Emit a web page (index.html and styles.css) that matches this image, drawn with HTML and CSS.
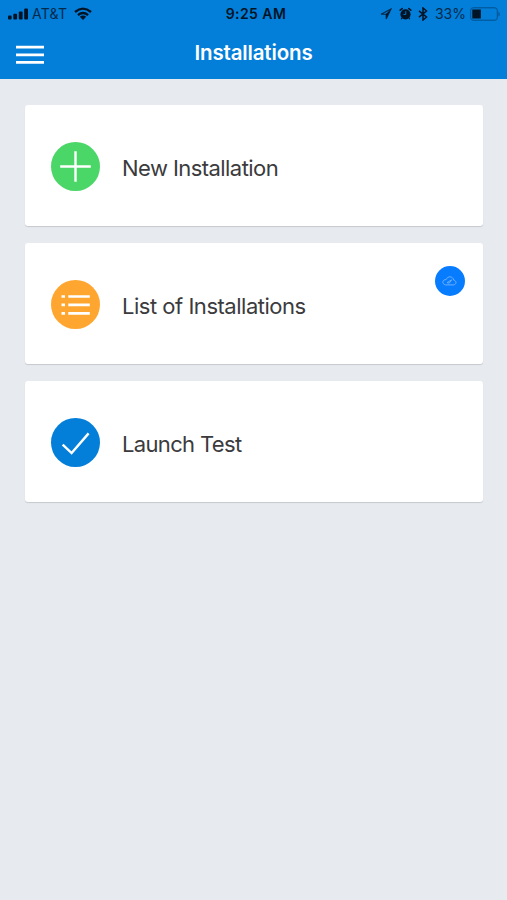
FILE: index.html
```html
<!DOCTYPE html>
<html lang="en">
<head>
<meta charset="utf-8">
<title>Installations</title>
<link rel="stylesheet" href="styles.css">
</head>
<body>
<header class="header">
  <div class="status">
    <div class="status-left">
      <svg class="signal" width="21" height="12" viewBox="0 0 21 12"><rect x="0" y="7.6" width="3.6" height="4" rx="1"/><rect x="5.3" y="5.8" width="3.8" height="5.8" rx="1"/><rect x="10.8" y="3.4" width="3.8" height="8.2" rx="1"/><rect x="16.2" y="0.4" width="3.8" height="11.2" rx="1"/></svg>
      <span class="carrier">AT&amp;T</span>
      <svg class="wifi" width="18" height="13" viewBox="0 0 18 13"><g fill="none" stroke="#001425" stroke-width="2.3"><path d="M1 5Q9-1.8 17 5"/><path d="M3.9 8.1Q9 3.8 14.1 8.1"/></g><path d="M5.8 9.7Q9 7.2 12.2 9.7L9 13Z"/></svg>
    </div>
    <span class="time">9:25 AM</span>
    <div class="status-right">
      <svg width="12" height="12" viewBox="0 0 12 12"><path d="M1 6.2L11 1L6.2 11V6.2Z" fill="none" stroke="#022a4a" stroke-width="1.1"/><path d="M6 6L11 1L6.5 10Z"/></svg>
      <svg class="alarm" width="13" height="14" viewBox="0 0 13 14"><circle cx="6.5" cy="7.3" r="5.1"/><path d="M1.2 3.2L3.2 1.6M9.8 1.6L11.8 3.2" stroke="#001425" stroke-width="1.6" stroke-linecap="round"/><path d="M3 11L2.2 12.3M10 11L10.8 12.3" stroke="#001425" stroke-width="1.2"/><path d="M6.8 4.2V7.5H4.4" fill="none" stroke="#0072c6" stroke-width="1"/></svg>
      <svg class="bluetooth" width="10" height="14" viewBox="0 0 10 14"><path d="M1 3.9L8.5 10L5 13V1L8.5 4L1 10.1" fill="none" stroke="#001425" stroke-width="1.5"/></svg>
      <span class="percent">33%</span>
      <svg class="battery" width="31" height="14" viewBox="0 0 31 14"><rect x=".7" y=".8" width="26.6" height="12.4" rx="2.5" fill="none" stroke="#034f8b" stroke-width="1"/><rect x="2.3" y="2.5" width="8.5" height="9"/><path d="M28.5 4.4Q31 7 28.5 9.6Z" fill="#034f8b"/></svg>
    </div>
  </div>
  <div class="navbar">
    <svg class="menu" width="28" height="20" viewBox="0 0 28 20"><path d="M0 2.1H28M0 9.8H28M0 17.4H28" stroke="#fff" stroke-width="2.8"/></svg>
    <h1 class="title">Installations</h1>
  </div>
</header>
<main class="cards">
  <a class="card">
    <svg class="icon" viewBox="0 0 49 49"><circle cx="24.5" cy="24.5" r="24.5" fill="#4bd668"/><path d="M9.2 24.5H39.8M24.5 9.2V39.8" stroke="#fff" stroke-width="2.4"/></svg>
    <span class="label label-new">New Installation</span>
  </a>
  <a class="card">
    <svg class="icon" viewBox="0 0 49 49"><circle cx="24.5" cy="24.5" r="24.5" fill="#ffa630"/><path d="M10.5 16.5H14M17.3 16.5H38.8M10.5 24.9H14M17.3 24.9H38.8M10.5 33.4H14M17.3 33.4H38.8" stroke="#fff" stroke-width="2.6"/></svg>
    <span class="label label-list">List of Installations</span>
    <span class="badge"><svg width="15" height="10" viewBox="0 0 15 10"><path d="M3.6 8.9H11.4C14.8 8.5 14.8 4.7 11.8 4.2C11 0 5.5-.4 4.2 3.6C.2 3.4-.5 8 3.6 8.9Z" fill="none" stroke="#7ab6ff" stroke-width=".9"/><path d="M5 6.6L9.7 3.8L7.2 7.2Z" fill="none" stroke="#7ab6ff" stroke-width=".8"/></svg></span>
  </a>
  <a class="card">
    <svg class="icon" viewBox="0 0 49 49"><circle cx="24.5" cy="24.5" r="24.5" fill="#037ed9"/><path d="M11.7 26.7L20.6 35.1L37.6 15.4" fill="none" stroke="#fff" stroke-width="2.4"/></svg>
    <span class="label label-test">Launch Test</span>
  </a>
</main>
</body>
</html>
```

FILE: styles.css
```css
* { box-sizing: border-box; }
body {
  margin: 0;
  min-height: 900px;
  background: #e7ebf0;
  font-family: Inter, "Liberation Sans", sans-serif;
  color: #3b3b3d;
}
svg { display: block; flex: none; fill: #001425; }
.header { height: 79px; background: #037ed9; }
.status {
  height: 27px;
  display: grid;
  grid-template-columns: 1fr auto 1fr;
  align-items: center;
  padding: 0 6px 0 11px;
  color: #001425;
  font-size: 13.5px;
  line-height: 27px;
}
.status-left, .status-right { display: flex; align-items: center; }
.status-left { margin-left: -3px; }
.status-right { justify-content: flex-end; }
.carrier { margin-left: 3px; color: #022a4a; font-size: 14px; letter-spacing: .25px; }
.wifi { margin-left: 7px; }
.time { font-size: 14px; font-weight: 600; letter-spacing: .45px; }
.alarm { margin-left: 7px; }
.bluetooth { margin-left: 6px; }
.percent { margin-left: 7px; color: #022a4a; font-size: 14px; }
.battery { margin-left: 4px; }
.navbar {
  height: 52px;
  display: grid;
  grid-template-columns: 1fr auto 1fr;
  padding: 0 16px;
}
.menu { margin-top: 18px; }
.title {
  margin: 0;
  color: #fff;
  font-size: 20.5px;
  font-weight: 600;
  letter-spacing: -.15px;
  line-height: 52px;
}
.cards {
  display: flex;
  flex-direction: column;
  gap: 16.5px;
  padding: 25.5px 24.5px 0 25px;
}
.card {
  position: relative;
  display: flex;
  align-items: center;
  height: 121.5px;
  padding: 3px 26px 0;
  border-radius: 3px;
  background: #fff;
  box-shadow: 0 1px 1px #c5c9cd;
}
.icon { width: 49px; height: 49px; }
.label { margin: 2px 0 0 22px; font-size: 22px; line-height: 28px; white-space: nowrap; }
.label-new { letter-spacing: -.56px; }
.label-list { letter-spacing: -.48px; }
.label-test { letter-spacing: -.66px; }
.badge {
  position: absolute;
  top: 23px;
  right: 18px;
  width: 30px;
  height: 30px;
  border-radius: 50%;
  background: #087cff;
  display: grid;
  place-items: center;
}
```
